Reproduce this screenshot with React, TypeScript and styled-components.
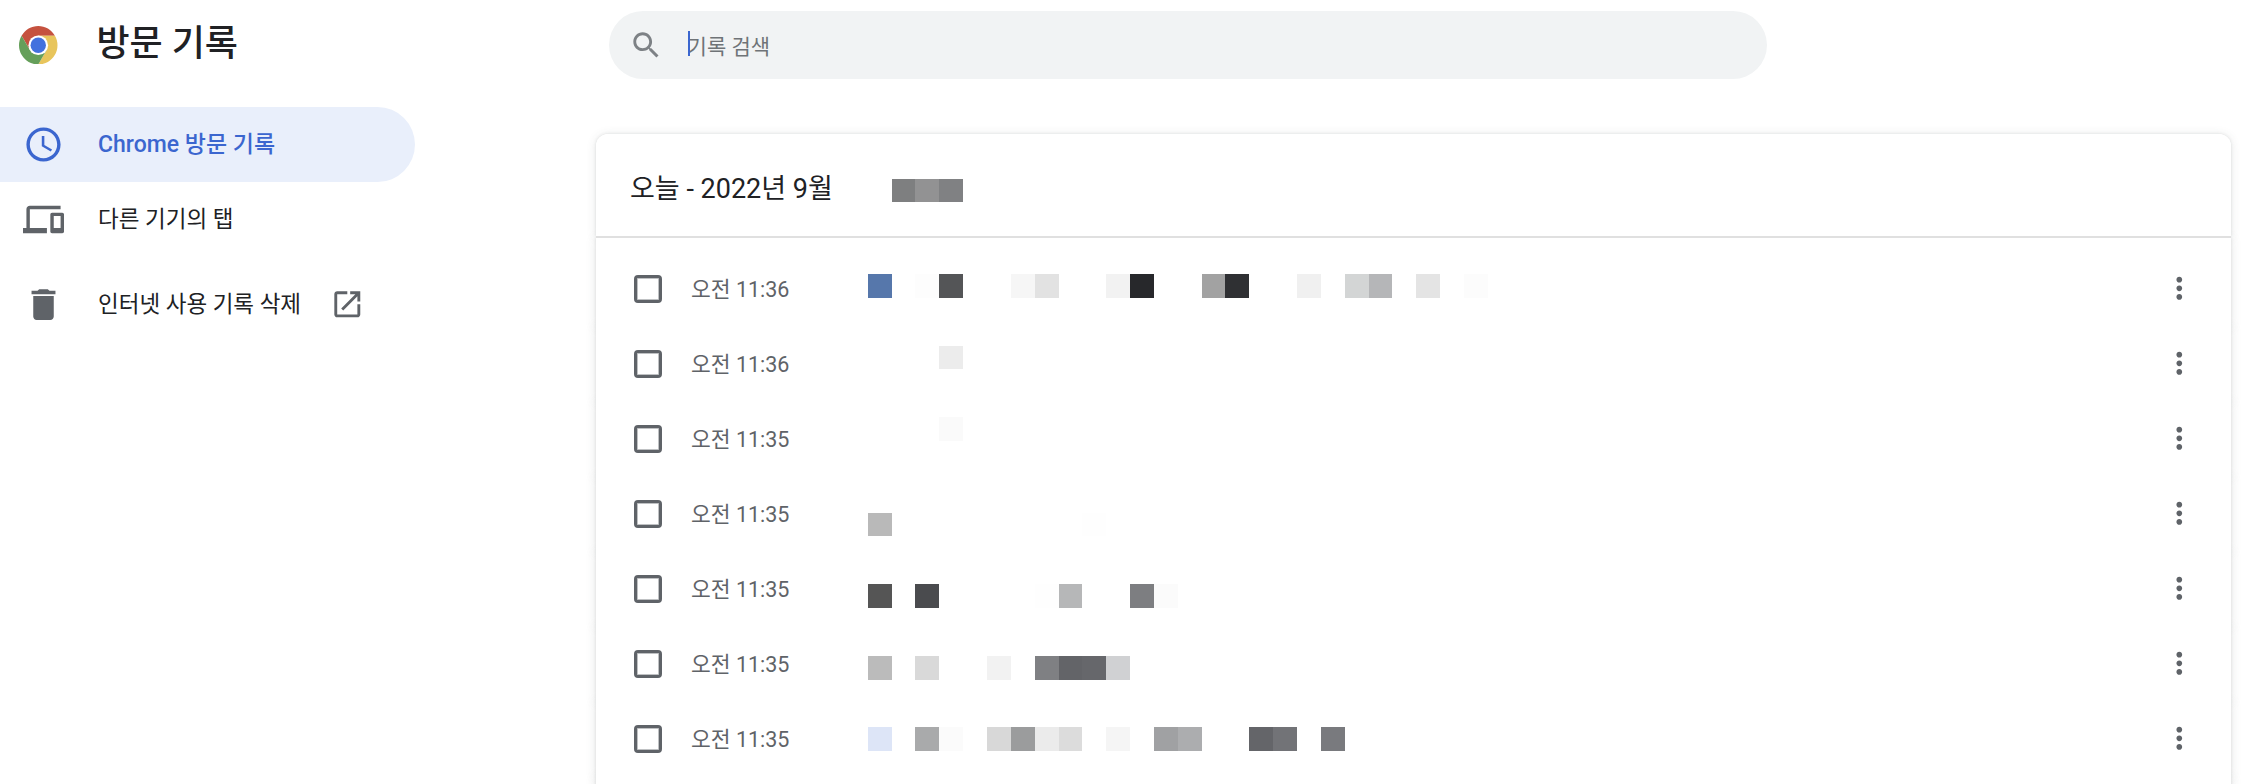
import React from 'react';
import styled, { createGlobalStyle } from 'styled-components';

const FONT = '"Roboto", "Noto Sans CJK KR", sans-serif';
const BLUE = '#3b66cf';
const GREY = '#5f6368';
const CARD_SHADOW = '0 0 3px rgba(60, 64, 67, 0.14), 0 1px 10px 1px rgba(60, 64, 67, 0.1)';

const GlobalStyle = createGlobalStyle`
  html, body {
    margin: 0;
    padding: 0;
    height: 100%;
    overflow: hidden;
    background: #fff;
    font-family: ${FONT};
    color: #202124;
  }
`;

const Page = styled.div`
  height: 100vh;
  display: flex;
  flex-direction: column;
  overflow: hidden;
`;

const Header = styled.header`
  height: 90px;
  flex: none;
  display: flex;
  align-items: center;
`;

const Brand = styled.div`
  width: 609px;
  flex: none;
  display: flex;
  align-items: center;
  gap: 39px;
  padding-left: 19px;
  box-sizing: border-box;
`;

const Title = styled.h1`
  margin: 0 0 3px;
  font-size: 36px;
  font-weight: 500;
  line-height: 44px;
`;

const SearchBar = styled.div`
  width: 1158px;
  height: 68px;
  display: flex;
  align-items: center;
  gap: 24px;
  padding-left: 20px;
  box-sizing: border-box;
  background: #f1f3f4;
  border-radius: 34px;
`;

const SearchText = styled.span`
  position: relative;
  font-size: 21px;
  color: #6f7377;
`;

const Caret = styled.i`
  position: absolute;
  left: 0;
  top: 1px;
  width: 2px;
  height: 25px;
  background: ${BLUE};
`;

const Body = styled.div`
  flex: 1;
  display: flex;
  min-height: 0;
`;

const Sidebar = styled.nav`
  width: 596px;
  flex: none;
  padding-top: 17px;
  box-sizing: border-box;
`;

const NavItem = styled.a<{ $active?: boolean; $spaced?: boolean }>`
  width: 415px;
  height: 75px;
  display: flex;
  align-items: center;
  gap: 34px;
  padding-left: 23px;
  box-sizing: border-box;
  margin-top: ${(p) => (p.$spaced ? '10px' : '0')};
  border-radius: 0 37.5px 37.5px 0;
  font-size: ${(p) => (p.$active ? '23px' : '22.5px')};
  font-weight: ${(p) => (p.$active ? 500 : 400)};
  color: ${(p) => (p.$active ? BLUE : '#202124')};
  background: ${(p) => (p.$active ? '#e9effb' : 'transparent')};
`;

const NavLabel = styled.span`
  margin-top: -5px;
`;

const ExternalIcon = styled.svg`
  width: 34.6px;
  height: 34.6px;
  margin-left: -5px;
  fill: ${GREY};
`;

const NavIcon = styled.svg<{ $grey?: boolean }>`
  width: 41px;
  height: 41px;
  flex: none;
  fill: ${(p) => (p.$grey ? GREY : 'currentColor')};
`;

const SmallIcon = styled.svg<{ $light?: boolean }>`
  width: 34.6px;
  height: 34.6px;
  flex: none;
  fill: ${(p) => (p.$light ? '#7d8185' : GREY)};
`;

const Card = styled.main`
  position: relative;
  flex: 1;
  margin: 44px 29px 0 0;
  isolation: isolate;
`;

const CardHead = styled.div`
  position: relative;
  height: 104px;
  display: flex;
  align-items: center;
  padding: 2px 0 0 34px;
  box-sizing: border-box;
  border-bottom: 2px solid #e0e0e0;
  font-size: 27px;
  &::before {
    content: '';
    position: absolute;
    inset: 0;
    z-index: -2;
    border-radius: 12px 12px 0 0;
    box-shadow: ${CARD_SHADOW};
  }
  &::after {
    content: '';
    position: absolute;
    inset: 0;
    z-index: -1;
    background: #fff;
    border-radius: 12px 12px 0 0;
  }
`;

const Rows = styled.div`
  padding-top: 13px;
`;

const Row = styled.div`
  position: relative;
  height: 75px;
  display: flex;
  align-items: center;
  padding: 0 34px 0 38px;
  &::before {
    content: '';
    position: absolute;
    inset: 0;
    z-index: -2;
    box-shadow: ${CARD_SHADOW};
  }
  &:first-child::before {
    top: -13px;
  }
  &::after {
    content: '';
    position: absolute;
    inset: -13px 0 0;
    z-index: -1;
    background: #fff;
  }
`;

const Check = styled.span`
  width: 28px;
  height: 28px;
  flex: none;
  box-sizing: border-box;
  border: 3px solid ${GREY};
  border-radius: 4px;
  box-shadow: inset 0 0 0 1px rgba(95, 99, 104, 0.4);
`;

const Time = styled.span`
  margin-left: 29px;
  margin-top: -3px;
  flex: 1;
  font-size: 21.5px;
  color: ${GREY};
`;

// 모자이크 처리된 부분
const Mosaic = styled.div`
  position: absolute;
  left: 271.8px;
  top: 44.6px;
  display: grid;
  grid-template-columns: repeat(27, 23.85px);
  grid-auto-rows: 23.87px;
  pointer-events: none;
`;

const Pixel = styled.span<{ $col: number; $row: number; $tone: string }>`
  grid-column: ${(p) => p.$col + 1};
  grid-row: ${(p) => p.$row + 1};
  background: ${(p) => p.$tone};
`;

const ChromeLogo = () => (
  <svg width="38.5" height="38.5" viewBox="0 0 100 100">
    <path fill="#c5523f" d="M50 25H93.3A50 50 0 0 0 6.7 25L28.35 62.5Z" />
    <path fill="#e8c55c" d="M71.65 62.5L50 100A50 50 0 0 0 93.3 25H50Z" />
    <path fill="#659f5a" d="M28.35 62.5L6.7 25A50 50 0 0 0 50 100L71.65 62.5Z" />
    <circle cx="50" cy="50" r="25.5" fill="#fff" />
    <circle cx="50" cy="50" r="20" fill="#4371de" />
  </svg>
);

const times = ['오전 11:36', '오전 11:36', '오전 11:35', '오전 11:35', '오전 11:35', '오전 11:35', '오전 11:35'];

// [row, [col, tone]...]
const pixels: [number, [number, string][]][] = [
  [0, [[1, '#7e7f80'], [2, '#929293'], [3, '#808183']]],
  [4, [[0, '#5677ab'], [2, '#fdfdfd'], [3, '#545557'], [6, '#f6f6f6'], [7, '#e2e2e2'], [10, '#f2f2f2'], [11, '#27282b'], [14, '#a2a2a2'], [15, '#2f3033'], [18, '#f0f0f0'], [20, '#d3d5d5'], [21, '#b5b6b8'], [23, '#e4e4e4'], [25, '#fcfcfc']]],
  [7, [[3, '#ececec']]],
  [10, [[3, '#fafafa']]],
  [14, [[0, '#b9b9b9'], [9, '#fefefe']]],
  [17, [[0, '#555555'], [2, '#4a4b4e'], [7, '#fefefe'], [8, '#b6b7b8'], [11, '#7d7e81'], [12, '#fbfbfb']]],
  [20, [[0, '#bbbbbb'], [2, '#d9d9d9'], [5, '#f2f2f2'], [7, '#7f8083'], [8, '#636468'], [9, '#66676b'], [10, '#d0d1d3']]],
  [23, [[0, '#dde5f7'], [2, '#a9aaab'], [3, '#fbfbfb'], [5, '#d8d8d8'], [6, '#9b9c9d'], [7, '#ebebeb'], [8, '#dcdcdc'], [10, '#f5f5f5'], [12, '#a0a1a3'], [13, '#acadaf'], [16, '#646569'], [17, '#727377'], [19, '#797a7e']]],
];

const App = () => {
  return (
    <Page>
      <GlobalStyle />
      <Header>
        <Brand>
          <ChromeLogo />
          <Title>방문 기록</Title>
        </Brand>
        <SearchBar>
          <SmallIcon $light viewBox="0 0 24 24">
            <path d="M15.5 14h-.79l-.28-.27C15.41 12.59 16 11.11 16 9.5 16 5.91 13.09 3 9.5 3S3 5.91 3 9.5 5.91 16 9.5 16c1.61 0 3.09-.59 4.23-1.57l.27.28v.79l5 4.99L20.49 19l-4.99-5zm-6 0C7.01 14 5 11.99 5 9.5S7.01 5 9.5 5 14 7.01 14 9.5 11.99 14 9.5 14z" />
          </SmallIcon>
          <SearchText>
            <Caret />
            기록 검색
          </SearchText>
        </SearchBar>
      </Header>
      <Body>
        <Sidebar>
          <NavItem $active>
            <NavIcon viewBox="0 0 24 24">
              <path d="M11.99 2C6.47 2 2 6.48 2 12s4.47 10 9.99 10C17.52 22 22 17.52 22 12S17.52 2 11.99 2zM12 20c-4.42 0-8-3.58-8-8s3.58-8 8-8 8 3.58 8 8-3.58 8-8 8z" />
              <path d="M12.5 7H11v6l5.25 3.15.75-1.23-4.5-2.67z" />
            </NavIcon>
            <NavLabel>Chrome 방문 기록</NavLabel>
          </NavItem>
          <NavItem>
            <NavIcon $grey viewBox="0 0 24 24">
              <path d="M4 6h18V4H4c-1.1 0-2 .9-2 2v11H0v3h14v-3H4V6zm19 2h-6c-.55 0-1 .45-1 1v10c0 .55.45 1 1 1h6c.55 0 1-.45 1-1V9c0-.55-.45-1-1-1zm-1 9h-4v-7h4v7z" />
            </NavIcon>
            <NavLabel>다른 기기의 탭</NavLabel>
          </NavItem>
          <NavItem $spaced>
            <NavIcon $grey viewBox="0 0 24 24">
              <path d="M6 19c0 1.1.9 2 2 2h8c1.1 0 2-.9 2-2V7H6v12zM19 4h-3.5l-1-1h-5l-1 1H5v2h14V4z" />
            </NavIcon>
            <NavLabel>인터넷 사용 기록 삭제</NavLabel>
            <ExternalIcon viewBox="0 0 24 24">
              <path d="M19 19H5V5h7V3H5c-1.11 0-2 .9-2 2v14c0 1.1.89 2 2 2h14c1.1 0 2-.9 2-2v-7h-2v7zM14 3v2h3.59l-9.83 9.83 1.41 1.41L19 6.41V10h2V3h-7z" />
            </ExternalIcon>
          </NavItem>
        </Sidebar>
        <Card>
          <CardHead>오늘 - 2022년 9월</CardHead>
          <Rows>
            {times.map((t, i) => (
              <Row key={i}>
                <Check />
                <Time>{t}</Time>
                <SmallIcon viewBox="0 0 24 24">
                  <path d="M12 8c1.1 0 2-.9 2-2s-.9-2-2-2-2 .9-2 2 .9 2 2 2zm0 2c-1.1 0-2 .9-2 2s.9 2 2 2 2-.9 2-2-.9-2-2-2zm0 6c-1.1 0-2 .9-2 2s.9 2 2 2 2-.9 2-2-.9-2-2-2z" />
                </SmallIcon>
              </Row>
            ))}
            <Row />
          </Rows>
          <Mosaic>
            {pixels.map(([row, cells]) =>
              cells.map(([col, tone]) => <Pixel key={`${row}-${col}`} $col={col} $row={row} $tone={tone} />)
            )}
          </Mosaic>
        </Card>
      </Body>
    </Page>
  );
};

export default App;
